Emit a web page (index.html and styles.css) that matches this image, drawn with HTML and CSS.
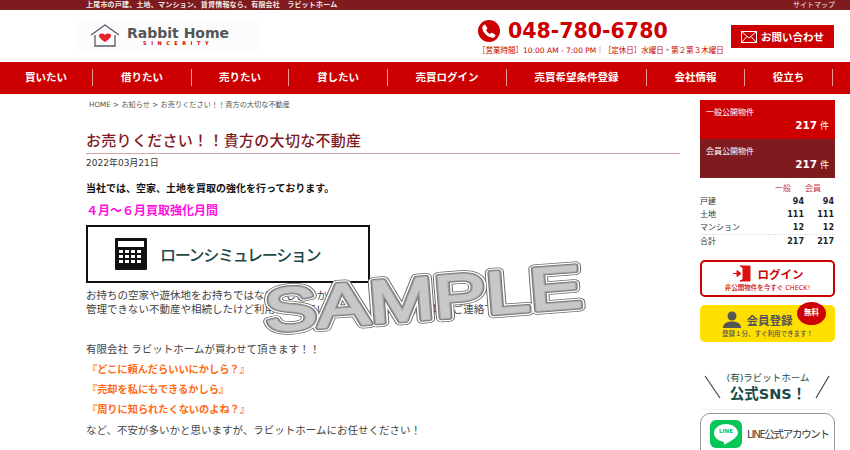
FILE: index.html
```html
<!DOCTYPE html>
<html lang="ja">
<head>
  <meta charset="UTF-8">
  <title>お売りください！！貴方の大切な不動産 | Rabbit Home</title>
  <link rel="stylesheet" href="styles.css">
</head>
<body>

  <!-- top strip -->
  <div class="topbar">
    <p class="topbar__lead">上尾市の戸建、土地、マンション、賃貸情報なら、有限会社　ラビットホーム</p>
    <a class="topbar__map">サイトマップ</a>
  </div>

  <!-- logo + contact -->
  <header class="header">
    <div class="logo">
      <svg class="logo__mark" width="30" height="24" viewBox="0 0 30 24">
        <path d="M1 11 15 1l14 10" fill="none" stroke="#555b66" stroke-width="1.3"/>
        <path d="M5 11v11h20V11" fill="none" stroke="#555b66" stroke-width="1.3"/>
        <path d="M15 18c-3-2.200-6-4-6-6.500C9 9.500 12.500 8.500 15 11c2.500-2.500 6-1.500 6 .5 0 2.500-3 4.300-6 6.500z" fill="#e8202a"/>
      </svg>
      <div class="logo__text">
        <span class="logo__name">Rabbit Home</span>
        <span class="logo__sub">SINCERITY</span>
      </div>
    </div>
    <div class="contact">
      <div class="contact__tel">
        <svg width="22" height="22" viewBox="0 0 22 22">
          <circle cx="11" cy="11" r="11" fill="#cc0000"/>
          <path d="M7.200 4.800 9.300 8c.2.400.1.800-.2 1.100l-1 1c.8 1.700 2.200 3.100 3.900 3.900l1-1c.3-.3.700-.4 1.100-.2l3.100 2c.4.300.5.700.2 1.100-.7 1.100-1.800 1.900-3 1.800C9.400 17.300 4.700 12.600 4.300 8c-.1-1.200.7-2.400 1.800-3.200.4-.3.800-.3 1.100 0z" fill="#fff"/>
        </svg>
        <span class="contact__num">048-780-6780</span>
      </div>
      <p class="contact__hours">［営業時間］10:00 AM - 7:00 PM｜［定休日］水曜日・第２第３木曜日</p>
    </div>
    <a class="inquiry">
      <svg width="16" height="12" viewBox="0 0 16 12" fill="none" stroke="#fff" stroke-width="1">
        <rect x=".5" y=".5" width="15" height="11"/>
        <path d="M.5.5 8 7l7.500-6.500M.5 11.500 6 5.500M15.500 11.500 10 5.500"/>
      </svg>
      お問い合わせ
    </a>
  </header>

  <!-- main nav -->
  <nav class="nav">
    <a class="nav__item">買いたい</a>
    <a class="nav__item">借りたい</a>
    <a class="nav__item">売りたい</a>
    <a class="nav__item">貸したい</a>
    <a class="nav__item">売買ログイン</a>
    <a class="nav__item">売買希望条件登録</a>
    <a class="nav__item">会社情報</a>
    <a class="nav__item">役立ち</a>
  </nav>

  <div class="page">
    <main class="main">
      <p class="crumbs">HOME &gt; お知らせ &gt; お売りください！！貴方の大切な不動産</p>
      <h1 class="title">お売りください！！貴方の大切な不動産</h1>
      <p class="date">2022年03月21日</p>
      <p class="lead">当社では、空家、土地を買取の強化を行っております。</p>
      <p class="pink">４月～６月買取強化月間</p>

      <a class="loan">
        <svg width="32" height="32" viewBox="0 0 32 32">
          <rect width="32" height="32" rx="1" fill="#111"/>
          <rect x="3" y="3" width="26" height="6" fill="#fff"/>
          <g fill="#fff">
            <rect x="4" y="12" width="4" height="3"/><rect x="10" y="12" width="4" height="3"/><rect x="16" y="12" width="4" height="3"/><rect x="22" y="12" width="4" height="3"/>
            <rect x="4" y="17" width="4" height="3"/><rect x="10" y="17" width="4" height="3"/><rect x="16" y="17" width="4" height="3"/><rect x="22" y="17" width="4" height="3"/>
            <rect x="4" y="22" width="4" height="3"/><rect x="10" y="22" width="4" height="3"/><rect x="16" y="22" width="4" height="3"/><rect x="22" y="22" width="4" height="3"/>
          </g>
        </svg>
        <span class="loan__text">ローンシミュレーション</span>
      </a>

      <p class="body-line">お持ちの空家や遊休地をお持ちではないでしょうか？</p>
      <p class="body-line">管理できない不動産や相続したけど利用に困っている土地・不動産、お気軽にご連絡下さい。</p>
      <p class="body-line body-line--gap">有限会社 ラビットホームが買わせて頂きます！！</p>
      <p class="orange">『どこに頼んだらいいにかしら？』</p>
      <p class="orange">『売却を私にもできるかしら』</p>
      <p class="orange">『周りに知られたくないのよね？』</p>
      <p class="body-line body-line--end">など、不安が多いかと思いますが、ラビットホームにお任せください！</p>
    </main>

    <aside class="side">
      <div class="count">
        <p class="count__label">一般公開物件</p>
        <p class="count__num"><b>217</b> 件</p>
      </div>
      <div class="count count--member">
        <p class="count__label">会員公開物件</p>
        <p class="count__num"><b>217</b> 件</p>
      </div>

      <table class="stock">
        <tr class="stock__head"><th></th><th>一般</th><th>会員</th></tr>
        <tr><td>戸建</td><td>94</td><td>94</td></tr>
        <tr><td>土地</td><td>111</td><td>111</td></tr>
        <tr><td>マンション</td><td>12</td><td>12</td></tr>
        <tr class="stock__total"><td>合計</td><td>217</td><td>217</td></tr>
      </table>

      <a class="btn btn--login">
        <span class="btn__row">
          <svg width="20" height="17" viewBox="0 0 20 17">
            <path d="M8 1h10v15H8l3-1.500V2.500z" fill="#d11" stroke="#d11"/>
            <path d="M1 8.500h4M5 5.500v6l4-3z" fill="#d11" stroke="#d11"/>
          </svg>
          <span class="btn__title">ログイン</span>
        </span>
        <span class="btn__note">非公開物件を今すぐ CHECK!</span>
      </a>

      <a class="btn btn--member">
        <span class="btn__row btn__row--shift">
          <svg width="18" height="17" viewBox="0 0 18 17">
            <circle cx="9" cy="5" r="4.500" fill="#555"/>
            <path d="M0 17c0-4 3-6.500 9-6.500s9 2.500 9 6.500z" fill="#555"/>
          </svg>
          <span class="btn__title">会員登録</span>
        </span>
        <span class="btn__note">登録１分、すぐ利用できます！</span>
        <span class="badge">無料</span>
      </a>

      <div class="sns">
        <svg width="17" height="24" viewBox="0 0 17 24"><path d="M1 1l15 22" stroke="#444" stroke-width="1.200"/></svg>
        <div class="sns__text">
          <p class="sns__co">(有)ラビットホーム</p>
          <p class="sns__big">公式SNS！</p>
        </div>
        <svg width="15" height="24" viewBox="0 0 15 24"><path d="M14 1L1 23" stroke="#444" stroke-width="1.200"/></svg>
      </div>

      <a class="line">
        <span class="line__icon">
          <svg width="24" height="21" viewBox="0 0 24 21">
            <path d="M12 0C5.400 0 0 4 0 9c0 4.500 4 8 9.500 8.800.8.200.5 1 .3 2.200 0 .6.500.8 1.200.4 3-1.800 13-6.500 13-11.400C24 4 18.600 0 12 0z" fill="#fff"/>
          </svg>
          <span class="line__word">LINE</span>
        </span>
        <span class="line__text">LINE公式アカウント</span>
      </a>
    </aside>
  </div>

  <!-- watermark over the page -->
  <svg class="sample" width="360" height="120" viewBox="0 0 360 120">
    <g transform="rotate(-4.500 180 60)" font-family="'Liberation Sans', sans-serif" font-size="60" text-anchor="middle" stroke-linejoin="round">
      <text x="178" y="81" textLength="318" lengthAdjust="spacingAndGlyphs" fill="none" stroke="#666" stroke-width="9">SAMPLE</text>
      <text x="178" y="81" textLength="318" lengthAdjust="spacingAndGlyphs" fill="none" stroke="#fff" stroke-width="7.500">SAMPLE</text>
      <text x="178" y="81" textLength="318" lengthAdjust="spacingAndGlyphs" fill="none" stroke="#707070" stroke-width="5">SAMPLE</text>
      <text x="178" y="81" textLength="318" lengthAdjust="spacingAndGlyphs" fill="none" stroke="#a0a0a0" stroke-width="3.500">SAMPLE</text>
      <text x="178" y="81" textLength="318" lengthAdjust="spacingAndGlyphs" fill="#c8c8c8" stroke="#c8c8c8" stroke-width="1.500">SAMPLE</text>
    </g>
  </svg>

</body>
</html>
```

FILE: styles.css
```css
/* Reset */
*, *::before, *::after {
  margin: 0;
  padding: 0;
  box-sizing: border-box;
}
html, body {
  height: 450px;
  overflow: hidden;
}
body {
  position: relative;
  font-family: "DejaVu Sans", "Noto Sans CJK JP", sans-serif;
  color: #333;
  background: #fff;
}

/* ===== Top strip ===== */
.topbar {
  height: 10px;
  padding: 0 15px 0 86px;
  display: flex;
  justify-content: space-between;
  align-items: center;
  background: #7f1a1f;
  color: #eee;
  font-size: 7px;
  line-height: 10px;
}
.topbar__lead {
  font-weight: 700;
  letter-spacing: .2px;
}

/* ===== Header ===== */
.header {
  height: 52px;
  display: flex;
  align-items: flex-start;
}
.logo {
  width: 183px;
  height: 30px;
  margin: 11px 0 0 76px;
  padding-left: 14px;
  display: flex;
  align-items: center;
  gap: 7px;
  background: #fcfcfc;
}
.logo__text {
  display: flex;
  flex-direction: column;
  align-items: center;
}
.logo__name {
  font-size: 14px;
  font-weight: 700;
  line-height: 14px;
  color: #555;
}
.logo__sub {
  font-size: 5px;
  font-weight: 700;
  line-height: 6px;
  letter-spacing: 4.500px;
  color: #cc0000;
}
.contact {
  width: 250px;
  margin: 10px 0 0 219px;
}
.contact__tel {
  height: 22px;
  display: flex;
  align-items: center;
  gap: 8px;
}
.contact__num {
  font-size: 20.500px;
  font-weight: 700;
  line-height: 22px;
  color: #cc0000;
}
.contact__hours {
  margin-top: 4px;
  font-size: 7.500px;
  line-height: 10px;
  white-space: nowrap;
  color: #cc0000;
}
.inquiry {
  width: 103px;
  height: 23px;
  margin: 15px 0 0 3px;
  display: flex;
  align-items: center;
  justify-content: center;
  gap: 4px;
  background: #cc0000;
  color: #fff;
  font-size: 10.500px;
  font-weight: 700;
}

/* ===== Nav ===== */
.nav {
  height: 32px;
  padding-top: 7px;
  display: grid;
  grid-template-columns: 93px 99px 97px 99px 119px 140px 98px 88px;
  background: #cc0000;
}
.nav__item {
  height: 17px;
  border-right: 1px solid #ec9a9a;
  color: #fff;
  font-size: 10.500px;
  font-weight: 700;
  line-height: 16px;
  text-align: center;
}

/* ===== Page columns ===== */
.page {
  display: flex;
  padding-left: 86px;
}
.main {
  width: 594px;
}
.crumbs {
  margin: 5px 0 0 3px;
  font-size: 7.200px;
  line-height: 11px;
  color: #555;
}
.title {
  margin-top: 21px;
  height: 23px;
  border-bottom: 1px solid #d9a6a8;
  color: #7f1a1f;
  font-size: 15px;
  font-weight: 500;
  line-height: 20px;
  letter-spacing: .300px;
}
.date {
  margin-top: 3px;
  font-size: 9px;
  line-height: 12px;
}
.lead {
  margin-top: 13px;
  color: #111;
  font-size: 10px;
  font-weight: 700;
  line-height: 14px;
}
.pink {
  margin-top: 8px;
  color: #ff10e0;
  font-size: 12px;
  font-weight: 700;
  line-height: 14px;
}
.loan {
  width: 284px;
  height: 58px;
  margin-top: 7px;
  padding-left: 27px;
  display: flex;
  align-items: center;
  gap: 13px;
  border: 2px solid #111;
}
.loan__text {
  color: #1c4a4a;
  font-size: 16px;
  letter-spacing: -1.300px;
  font-weight: 500;
}
.body-line {
  margin-top: 1px;
  font-size: 10.500px;
  line-height: 13px;
  color: #444;
}
.loan + .body-line {
  margin-top: 6px;
}
.body-line--gap {
  margin-top: 27px;
}
.body-line--end {
  margin-top: 8px;
}
.orange {
  margin: 7px 0 0 1px;
  color: #ff6a14;
  font-size: 10.200px;
  font-weight: 700;
  line-height: 13px;
}

/* ===== Sidebar ===== */
.side {
  width: 135px;
  margin: 6px 0 0 20px;
}
.count {
  height: 39px;
  padding: 7px 6px 0 6px;
  background: #cc0000;
  color: #fff;
  font-size: 8px;
  line-height: 11px;
}
.count--member {
  background: #7f1a1f;
}
.count__num {
  margin-top: 2px;
  font-size: 9px;
  text-align: right;
}
.count__num b {
  font-size: 10.500px;
}
.stock {
  width: 135px;
  margin-top: 4px;
  border-collapse: collapse;
  font-size: 8px;
  line-height: 13px;
}
.stock td,
.stock th {
  padding: 0;
  font-weight: 400;
  white-space: nowrap;
}
.stock td + td {
  width: 30px;
  padding-right: 1px;
  font-weight: 700;
  text-align: right;
  color: #222;
}
.stock th {
  color: #cc3344;
  text-align: right;
  padding-right: 14px;
}
.stock__total td {
  border-top: 1px dotted #ddd;
}
.btn {
  position: relative;
  display: flex;
  flex-direction: column;
  align-items: center;
  width: 135px;
  height: 37px;
  padding-top: 3px;
  border-radius: 5px;
}
.btn--login {
  margin-top: 12px;
  border: 2px solid #cc0000;
  color: #cc0000;
}
.btn--member {
  margin-top: 8px;
  padding-top: 6px;
  background: #ffdf00;
  color: #555;
}
.btn__row {
  height: 17px;
  display: flex;
  align-items: center;
  gap: 6px;
}
.btn__row--shift {
  margin-right: 20px;
}
.btn__title {
  font-size: 11.500px;
  font-weight: 700;
}
.btn__note {
  margin-top: 3px;
  font-size: 6.500px;
  line-height: 7px;
  font-weight: 500;
  white-space: nowrap;
}
.badge {
  position: absolute;
  top: -3px;
  right: 9px;
  width: 29px;
  height: 23px;
  border-radius: 50%;
  background: #cc0000;
  color: #fff;
  font-size: 7.500px;
  font-weight: 700;
  line-height: 21px;
  text-align: center;
}
.sns {
  margin-top: 29px;
  padding: 0 5px 6px 4px;
  display: flex;
  align-items: center;
  justify-content: space-between;
  border-bottom: 1px solid #f6f6f6;
}
.sns__text {
  text-align: center;
  color: #1c4a4a;
}
.sns__co {
  font-size: 9.500px;
  line-height: 14px;
  white-space: nowrap;
}
.sns__big {
  font-size: 14.500px;
  font-weight: 700;
  line-height: 18px;
  white-space: nowrap;
}
.line {
  height: 60px;
  margin-top: 3px;
  padding: 6px 0 0 9px;
  display: flex;
  align-items: flex-start;
  gap: 5px;
  border: 1px solid #999;
  border-radius: 10px;
}
.line__icon {
  position: relative;
  width: 32px;
  height: 28px;
  flex: none;
  display: flex;
  align-items: center;
  justify-content: center;
  border-radius: 6px;
  background: #06c755;
}
.line__word {
  position: absolute;
  top: 7px;
  left: 0;
  width: 100%;
  color: #06c755;
  font-size: 5.500px;
  font-weight: 700;
  line-height: 8px;
  text-align: center;
}
.line__text {
  margin-top: 6px;
  font-family: "Noto Sans CJK JP", sans-serif;
  font-size: 10.500px;
  line-height: 16px;
  letter-spacing: -1.300px;
  white-space: nowrap;
  color: #333;
}

/* watermark sits over the article */
.sample {
  position: absolute;
  top: 238px;
  left: 245px;
}
```
